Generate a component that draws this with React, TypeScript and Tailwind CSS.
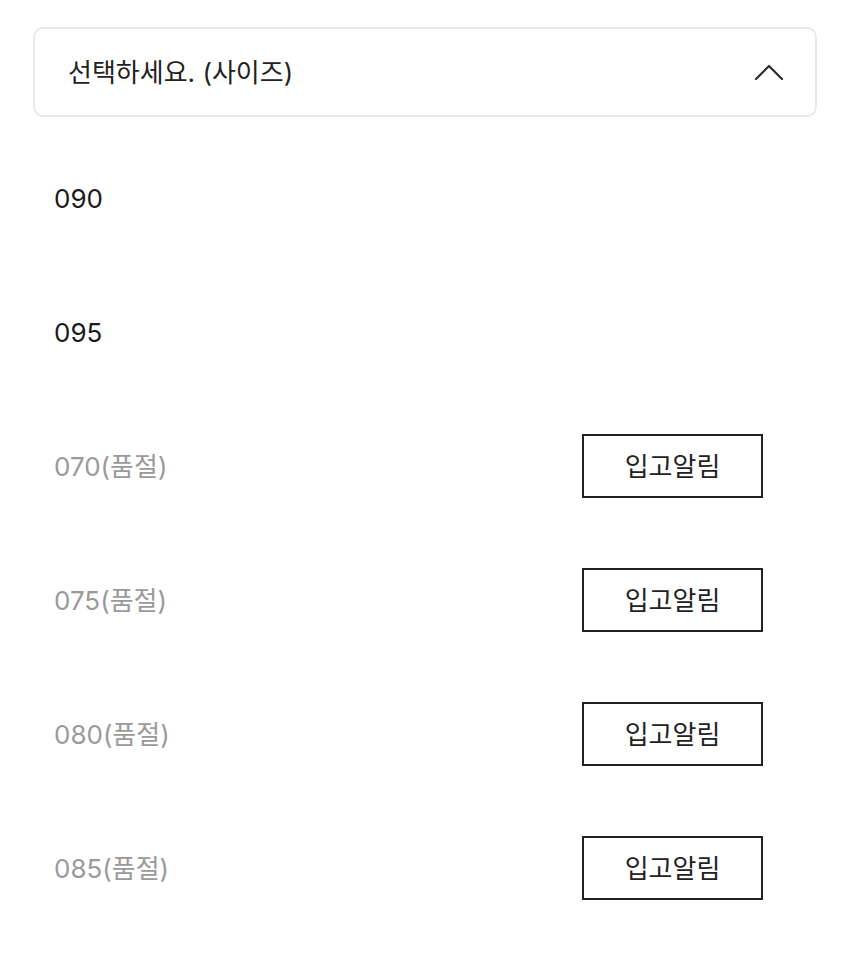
type SizeOption = {
  label: string;
  soldOut: boolean;
};

const sizes: SizeOption[] = [
  { label: "090", soldOut: false },
  { label: "095", soldOut: false },
  { label: "070", soldOut: true },
  { label: "075", soldOut: true },
  { label: "080", soldOut: true },
  { label: "085", soldOut: true },
];

// thin caret shown while the size list is open
const CaretUp = () => (
  <svg
    width="30"
    height="18"
    viewBox="0 0 30 18"
    fill="none"
    stroke="#2b2b2b"
    strokeWidth="2.2"
    strokeLinecap="round"
    strokeLinejoin="round"
  >
    <polyline points="2,16 15,3 28,16" />
  </svg>
);

const App = () => {
  return (
    <div
      className="w-[850px] min-h-[962px] bg-white px-[33px] pt-[27px]"
      style={{ fontFamily: 'Inter, "Noto Sans CJK KR", sans-serif' }}
    >
      <button className="flex h-[90px] w-full items-center justify-between rounded-[10px] border-2 border-[#e9e9e9] pl-[33px] pr-[31px] text-left">
        <span className="text-[26px] text-[#222]">선택하세요. (사이즈)</span>
        <CaretUp />
      </button>

      <ul className="mt-[14px]">
        {sizes.map((size) => (
          <li
            key={size.label}
            className="flex h-[134px] items-center justify-between pl-[21px] pr-[54px]"
          >
            <span
              className={`text-[26px] ${
                size.soldOut ? "text-[#9a9a9a]" : "text-[#1a1a1a]"
              }`}
            >
              {size.label}
              {size.soldOut && "(품절)"}
            </span>
            {size.soldOut && (
              <button className="flex h-[64px] w-[181px] items-center justify-center border-2 border-[#222] text-[26px] text-[#222]">
                입고알림
              </button>
            )}
          </li>
        ))}
      </ul>
    </div>
  );
};

export default App;
